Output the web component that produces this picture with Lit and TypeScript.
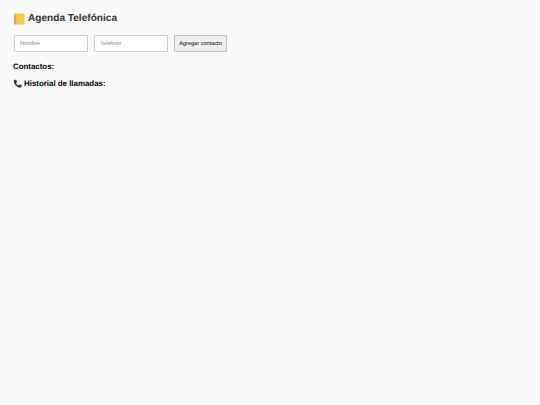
import { LitElement, html, css } from "lit";
import { customElement } from "lit/decorators.js";

@customElement("app-root")
export class AppRoot extends LitElement {
  static styles = css`
    :host { display: block; min-height: 405px; background: #f9f9f9; font-family: "Liberation Sans", Arial, sans-serif; color: #000; text-rendering: geometricPrecision; }
    .page { padding: 12px 13px 0; display: flex; flex-direction: column; align-items: flex-start; }
    h1 { margin: 0; font-size: 10.1px; line-height: 14px; font-weight: 700; color: #333; display: flex; align-items: center; gap: 3px; }
    h2 { margin: 0; font-size: 7.9px; line-height: 11px; font-weight: 700; display: flex; align-items: center; gap: 2px; }
    .icon { display: block; flex: none; }
    form { display: flex; align-items: center; gap: 6px; margin: 9px 0 0 1px; }
    input { box-sizing: border-box; width: 74px; height: 17px; margin: 0; padding: 0 5px; border: 1px solid #ccc; border-radius: 1px; background: #fff; font: 5.6px "Liberation Sans", Arial, sans-serif; text-rendering: geometricPrecision; outline: none; }
    input::placeholder { color: #858585; opacity: 1; }
    button { box-sizing: border-box; width: 53px; height: 17px; margin: 0; padding: 0; border: 1px solid #bbb; border-radius: 1px; background: #efefef; color: #000; font: 5.6px "Liberation Sans", Arial, sans-serif; text-rendering: geometricPrecision; }
    .contacts { margin-top: 9px; }
    .history { margin-top: 6px; }
  `;

  render() {
    return html`<div class="page">
      <h1>
        <svg class="icon" width="12" height="12" viewBox="0 0 12 12">
          <rect x="1" y="0.5" width="10.5" height="11" rx="1" fill="#f6c945" />
          <rect x="1" y="0.5" width="2.2" height="11" rx="1" fill="#d2ab55" />
        </svg>
        Agenda Telefónica
      </h1>
      <form @submit=${(e: Event) => e.preventDefault()}>
        <input placeholder="Nombre" />
        <input placeholder="Teléfono" />
        <button type="submit">Agregar contacto</button>
      </form>
      <h2 class="contacts">Contactos:</h2>
      <h2 class="history">
        <svg class="icon" width="9" height="9" viewBox="0 0 24 24">
          <path fill="#2f3a40" d="M5 2 L9 2 L11 8 L8 10.5 C9.5 14 11 15.5 14.5 17 L17 14 L23 16 L23 20 C23 22 21 23 19 23 C10 22.5 2.5 14 2 6 C2 4 3 2 5 2 Z" />
        </svg>
        Historial de llamadas:
      </h2>
    </div>`;
  }
}
